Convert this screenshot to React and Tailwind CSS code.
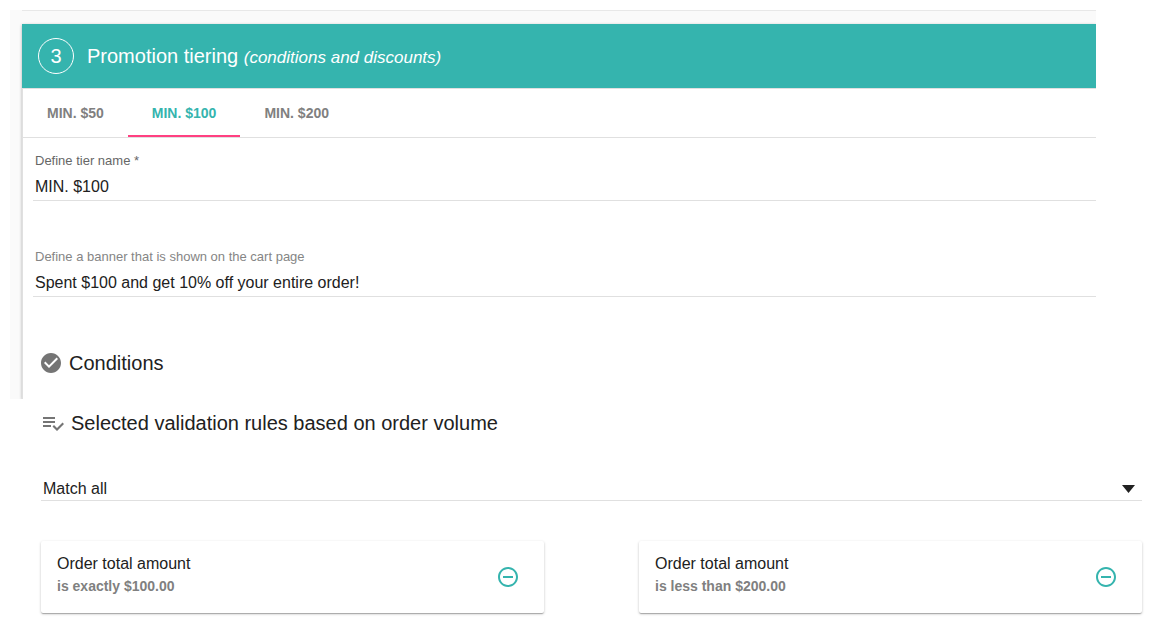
import { useState } from 'react'
import { MdCheckCircle, MdRemoveCircleOutline } from 'react-icons/md'

const initialTiers = [
	{ name: 'MIN. $50', banner: 'Spent $50 and get 5% off your entire order!' },
	{ name: 'MIN. $100', banner: 'Spent $100 and get 10% off your entire order!' },
	{ name: 'MIN. $200', banner: 'Spent $200 and get 20% off your entire order!' },
]

const initialRules = [
	{ id: 1, title: 'Order total amount', detail: 'is exactly $100.00' },
	{ id: 2, title: 'Order total amount', detail: 'is less than $200.00' },
]

const PlaylistCheckIcon = () => (
	<svg viewBox="0 0 24 24" className="size-6 shrink-0 fill-[#757575]" aria-hidden="true">
		<path d="M14 10H2v2h12v-2zm0-4H2v2h12V6zM2 14v2h8v-2H2zm19.5-2.5L23 13l-6.99 7-4.51-4.5L13 14l3.01 3 5.49-5.5z" />
	</svg>
)

const TextField = ({ id, label, value, onChange, labelClass }) => (
	<div className="flex flex-col border-b border-[#e0e0e0]">
		<label htmlFor={id} className={`px-0.5 text-[13px] leading-4 ${labelClass}`}>
			{label}
		</label>
		<input
			id={id}
			type="text"
			value={value}
			onChange={onChange}
			className="h-[31px] w-full bg-transparent px-0.5 pt-1 text-base outline-none"
		/>
	</div>
)

const RuleCard = ({ rule, onRemove }) => (
	<li className="flex h-[72px] items-center justify-between rounded-xs bg-white pr-6 pl-4 shadow-[0_1px_3px_rgba(0,0,0,0.2),0_1px_1px_rgba(0,0,0,0.14),0_2px_1px_-1px_rgba(0,0,0,0.12)]">
		<div className="pb-1.5">
			<h4 className="text-base leading-6">{rule.title}</h4>
			<p className="text-sm leading-5 font-bold text-[#808080]">{rule.detail}</p>
		</div>
		<button type="button" aria-label={`Remove rule: ${rule.detail}`} onClick={onRemove} className="text-[#35b4ae]">
			<MdRemoveCircleOutline className="size-6" />
		</button>
	</li>
)

const App = () => {
	const [tiers, setTiers] = useState(initialTiers)
	const [active, setActive] = useState(1)
	const [rules, setRules] = useState(initialRules)

	const updateTier = (key) => (e) => {
		setTiers(tiers.map((tier, i) => (i === active ? { ...tier, [key]: e.target.value } : tier)))
	}

	return (
		<main className="bg-white pt-2.5 font-['Helvetica_Neue','Liberation_Sans',Arial,sans-serif] text-[#212121]">
			{/* tier editor */}
			<section className="mr-[68px] ml-2.5 overflow-hidden bg-[#fafafa] pl-3">
				<div className="h-3.5 border-t border-[#e8e8e8]" />
				<div className="bg-white shadow-[0_1px_3px_rgba(0,0,0,0.3)]">
					<header className="flex h-16 items-center gap-[13px] bg-[#35b4ae] px-4 text-white">
						<span className="flex size-9 items-center justify-center rounded-full border border-white text-xl">3</span>
						<h2 className="text-xl">
							Promotion tiering <em className="text-[17px]">(conditions and discounts)</em>
						</h2>
					</header>

					<div className="border-t border-l border-[#e0e0e0]">
						<div role="tablist" className="flex h-[49px] border-b border-[#e0e0e0]">
							{tiers.map((tier, i) => (
								<button
									key={i}
									type="button"
									role="tab"
									aria-selected={i === active}
									onClick={() => setActive(i)}
									className={`border-b-2 px-6 pt-0.5 text-sm font-bold ${
										i === active ? 'border-[#ff4081] text-[#35b4ae]' : 'border-transparent text-[#808080]'
									}`}
								>
									{tier.name}
								</button>
							))}
						</div>

						<div className="flex flex-col gap-12 pt-[15px] pl-2.5">
							<TextField
								id="tier-name"
								label="Define tier name *"
								value={tiers[active].name}
								onChange={updateTier('name')}
								labelClass="text-[#666666]"
							/>
							<TextField
								id="tier-banner"
								label="Define a banner that is shown on the cart page"
								value={tiers[active].banner}
								onChange={updateTier('banner')}
								labelClass="text-[#858585]"
							/>
						</div>

						<div className="flex items-center gap-1.5 pt-[54px] pb-6 pl-4">
							<MdCheckCircle className="size-6 text-[#757575]" />
							<h3 className="text-xl leading-6">Conditions</h3>
						</div>
					</div>
				</div>
			</section>

			{/* validation rules */}
			<section className="pt-3 pr-[22px] pb-3 pl-[41px]">
				<div className="flex items-center gap-1.5">
					<PlaylistCheckIcon />
					<h3 className="text-xl leading-6">Selected validation rules based on order volume</h3>
				</div>

				<div className="relative mt-10 border-b border-[#e0e0e0]">
					<select
						aria-label="Rule matching"
						defaultValue="all"
						className="block h-[25px] w-full appearance-none bg-transparent px-0.5 pt-0.5 text-base outline-none"
					>
						<option value="all">Match all</option>
						<option value="any">Match any</option>
					</select>
					<svg viewBox="0 0 13 8" className="pointer-events-none absolute right-[7px] bottom-[7px] h-2 w-[13px]" aria-hidden="true">
						<path d="M0 0h13L6.5 8z" fill="#212121" />
					</svg>
				</div>

				<ul className="mt-10 grid grid-cols-2 gap-x-[95px] gap-y-6">
					{rules.map((rule) => (
						<RuleCard key={rule.id} rule={rule} onRemove={() => setRules(rules.filter((r) => r.id !== rule.id))} />
					))}
				</ul>
			</section>
		</main>
	)
}

export default App
